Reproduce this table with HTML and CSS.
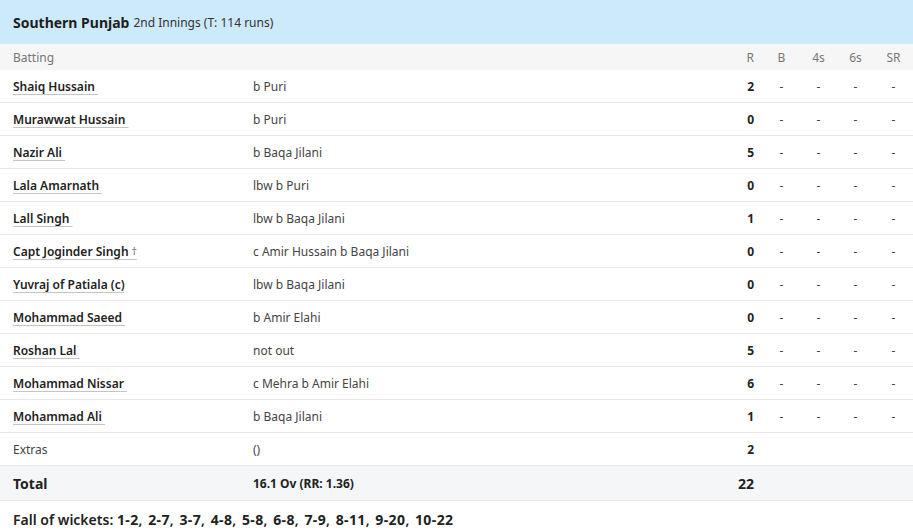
FILE: index.html
```html
<!DOCTYPE html>
<html lang="en">
<head>
    <meta charset="UTF-8">
    <meta name="viewport" content="width=device-width, initial-scale=1.0">
    <title>Scorecard - Southern Punjab</title>
    <link rel="stylesheet" href="styles.css">
</head>
<body>
    <div class="innings">
        <div class="innings-head">
            <span class="team">Southern Punjab</span>
            <span class="sub">2nd Innings (T: 114 runs)</span>
        </div>
        <table class="card">
            <colgroup>
                <col class="c-name">
                <col>
                <col class="c-r">
                <col class="c-s">
                <col class="c-s">
                <col class="c-s">
                <col class="c-sr">
            </colgroup>
            <thead>
                <tr>
                    <th class="name">Batting</th>
                    <th></th>
                    <th class="runs">R</th>
                    <th>B</th>
                    <th>4s</th>
                    <th>6s</th>
                    <th>SR</th>
                </tr>
            </thead>
            <tbody>
                <tr><td class="name"><a href="#">Shaiq Hussain </a></td><td>b Puri</td><td class="runs">2</td><td>-</td><td>-</td><td>-</td><td>-</td></tr>
                <tr><td class="name"><a href="#">Murawwat Hussain </a></td><td>b Puri</td><td class="runs">0</td><td>-</td><td>-</td><td>-</td><td>-</td></tr>
                <tr><td class="name"><a href="#">Nazir Ali </a></td><td>b Baqa Jilani</td><td class="runs">5</td><td>-</td><td>-</td><td>-</td><td>-</td></tr>
                <tr><td class="name"><a href="#">Lala Amarnath </a></td><td>lbw b Puri</td><td class="runs">0</td><td>-</td><td>-</td><td>-</td><td>-</td></tr>
                <tr><td class="name"><a href="#">Lall Singh </a></td><td>lbw b Baqa Jilani</td><td class="runs">1</td><td>-</td><td>-</td><td>-</td><td>-</td></tr>
                <tr><td class="name"><a href="#">Capt Joginder Singh <span class="dagger">†</span></a></td><td>c Amir Hussain b Baqa Jilani</td><td class="runs">0</td><td>-</td><td>-</td><td>-</td><td>-</td></tr>
                <tr><td class="name"><a href="#">Yuvraj of Patiala (c)</a></td><td>lbw b Baqa Jilani</td><td class="runs">0</td><td>-</td><td>-</td><td>-</td><td>-</td></tr>
                <tr><td class="name"><a href="#">Mohammad Saeed </a></td><td>b Amir Elahi</td><td class="runs">0</td><td>-</td><td>-</td><td>-</td><td>-</td></tr>
                <tr><td class="name"><a href="#">Roshan Lal </a></td><td>not out</td><td class="runs">5</td><td>-</td><td>-</td><td>-</td><td>-</td></tr>
                <tr><td class="name"><a href="#">Mohammad Nissar </a></td><td>c Mehra b Amir Elahi</td><td class="runs">6</td><td>-</td><td>-</td><td>-</td><td>-</td></tr>
                <tr><td class="name"><a href="#">Mohammad Ali </a></td><td>b Baqa Jilani</td><td class="runs">1</td><td>-</td><td>-</td><td>-</td><td>-</td></tr>
                <tr class="extras"><td class="name">Extras</td><td>()</td><td class="runs">2</td><td></td><td></td><td></td><td></td></tr>
                <tr class="total"><td class="name">Total</td><td class="ov">16.1 Ov (RR: 1.36)</td><td class="runs">22</td><td></td><td></td><td></td><td></td></tr>
            </tbody>
        </table>
        <div class="fow">
            Fall of wickets: <span class="fow-list"><b>1-2</b>, <b>2-7</b>, <b>3-7</b>, <b>4-8</b>, <b>5-8</b>, <b>6-8</b>, <b>7-9</b>, <b>8-11</b>, <b>9-20</b>, <b>10-22</b></span>
        </div>
    </div>
</body>
</html>
```

FILE: styles.css
```css
body {
    margin: 0;
    padding: 0;
    background-color: #fff;
    font-family: "Noto Sans", "Open Sans", sans-serif;
    color: #222;
}
.innings-head {
    background-color: #cdeafa;
    height: 44px;
    padding: 0 13px;
    display: flex;
    align-items: center;
    gap: 4px;
}
.team {
    font-size: 14px;
    font-weight: 700;
    color: #1e1e1e;
}
.sub {
    font-size: 12px;
    color: #333;
}
.card {
    width: 100%;
    border-collapse: collapse;
    table-layout: fixed;
    font-size: 12px;
}
.c-name { width: 253px; }
.c-r { width: 60px; }
.c-s { width: 37px; }
.c-sr { width: 39px; }
.card th {
    background-color: #f6f6f7;
    color: #777;
    font-weight: 400;
    height: 25px;
    padding: 0;
    padding-top: 1px;
    text-align: center;
}
.card td {
    height: 32px;
    padding: 0;
    border-bottom: 1px solid #e8e8e8;
    color: #444;
    text-align: center;
}
.card td:nth-child(2) {
    text-align: left;
}
.card th:nth-child(2) {
    text-align: left;
}
.card .name {
    padding-left: 13px;
    text-align: left;
}
.card .runs {
    text-align: right;
    padding-right: 9px;
    font-weight: 700;
    color: #222;
}
.card th.runs {
    font-weight: 400;
    color: #777;
}
.card td.name a {
    color: #222;
    font-weight: 600;
    text-decoration: underline;
    text-decoration-color: #c4c4c4;
    text-decoration-thickness: 1px;
    text-underline-offset: 3px;
    white-space: pre;
}
.dagger {
    font-size: 10px;
    font-weight: 400;
    color: #666;
    vertical-align: 1px;
}
.extras td.name {
    color: #444;
}
.total td {
    background-color: #f5f6f7;
    height: 34px;
}
.total td.name {
    font-size: 14px;
    font-weight: 700;
    color: #222;
}
.total td.ov {
    font-weight: 700;
    color: #222;
}
.total td.runs {
    font-size: 14px;
}
.fow {
    padding: 9px 13px;
    font-size: 14px;
    font-weight: 600;
    color: #222;
}
.fow-list {
    word-spacing: 2px;
}
.fow b {
    font-weight: 700;
    letter-spacing: 0.4px;
}
```
